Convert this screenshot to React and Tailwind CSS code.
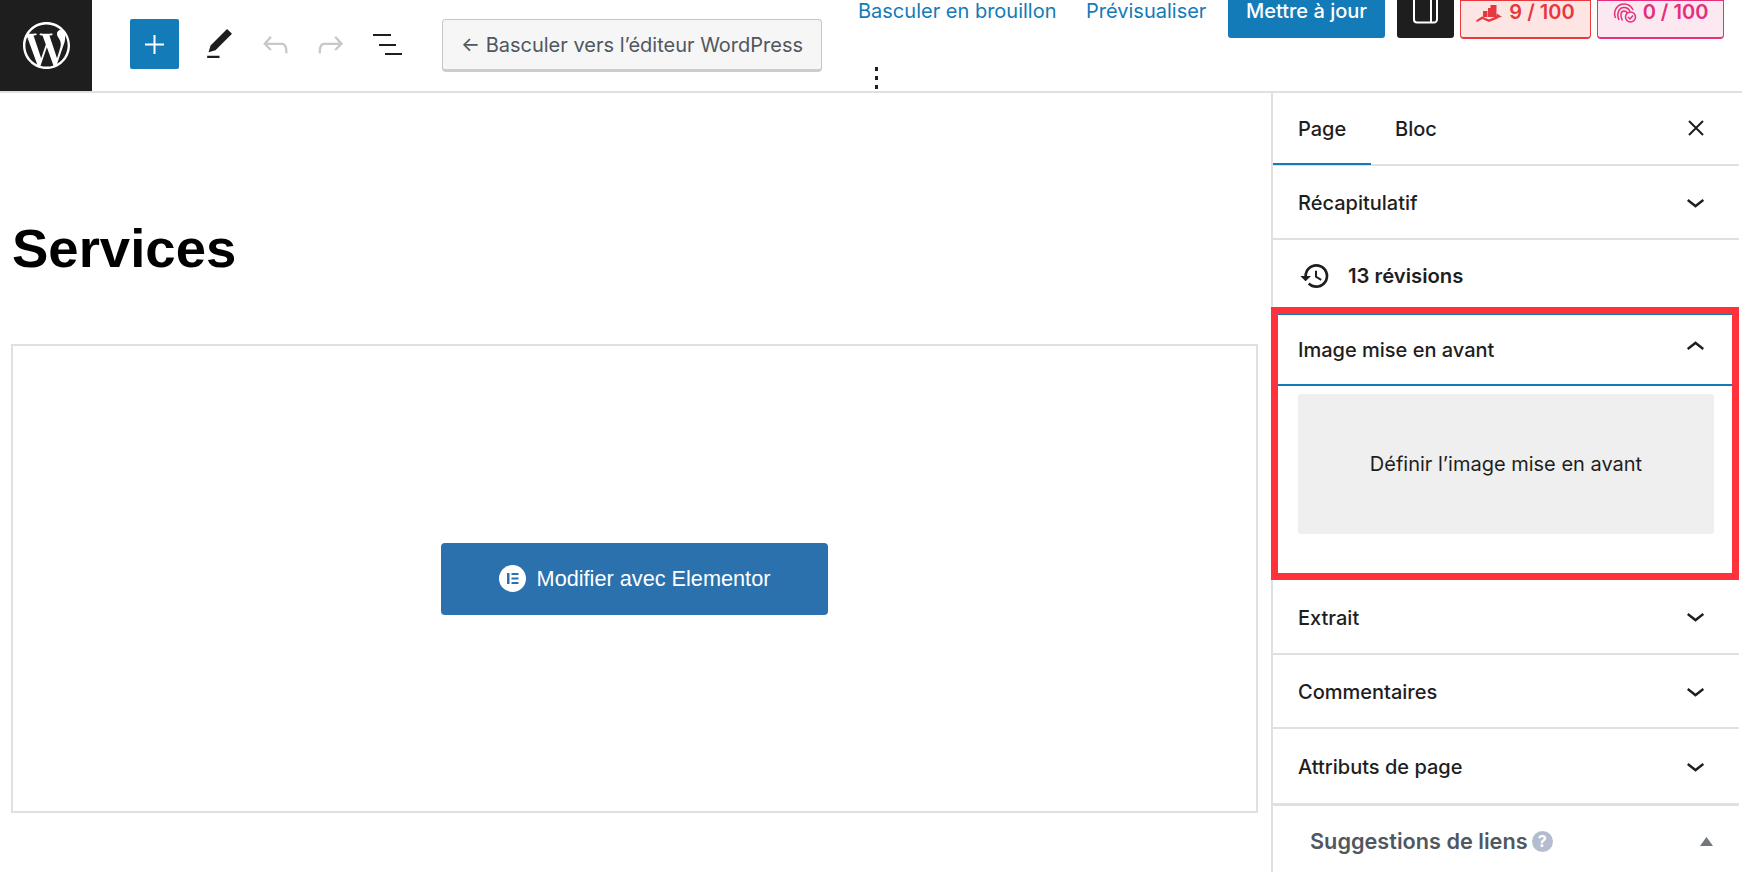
import React from "react";
import { SiWordpress } from "react-icons/si";
import { MdHistory } from "react-icons/md";

const Icon = ({ d, size = 37, className = "" }) => (
  <svg viewBox="0 0 24 24" width={size} height={size} fill="currentColor" className={`shrink-0 ${className}`}>
    <path d={d} />
  </svg>
);

const DOWN = "M17.5 11.6L12 16l-5.5-4.4.9-1.2L12 14l4.6-3.6 1 1.2z";
const UP = "M6.5 12.4L12 8l5.5 4.4-.9 1.2L12 10l-4.6 3.6-1-1.2z";

function Row({ label, border = true, tall = false }) {
  return (
    <div className={`flex items-center justify-between pl-[25px] shrink-0 ${tall ? "h-[75px]" : "h-[74px]"} ${border ? "border-b-2 border-[#e0e0e0]" : ""}`}>
      <span className="text-[20px] font-medium text-[#1e1e1e] pt-[2px]">{label}</span>
      <Icon d={DOWN} size={37} className="mr-[25px] mb-[2px] text-[#1e1e1e]" />
    </div>
  );
}

export default function App() {
  return (
    <div className="h-[872px] w-[1742px] overflow-hidden bg-white font-['Inter',sans-serif] flex flex-col">
      <header className="h-[93px] shrink-0 border-b-2 border-[#e0e0e0] flex items-start overflow-hidden">
        <div className="w-[92px] h-[91px] bg-[#1e1e1e] flex items-center justify-center text-white">
          <SiWordpress size={47} />
        </div>
        <div className="flex items-center h-[90px] ml-[38px] pb-[2px]">
          <div className="w-[49px] h-[50px] rounded-[2px] bg-[#127bb8] flex items-center justify-center">
            <svg width="19" height="19" viewBox="0 0 19 19" fill="none" stroke="white" strokeWidth="2">
              <path d="M9.5 0v19M0 9.5h19" />
            </svg>
          </div>
          <Icon d="M20.1 5.1L16.9 2 6.2 12.7l-1.3 4.4 4.5-1.3L20.1 5.1zM4 20.8h8v-1.5H4v1.5z" className="ml-[22px] text-[#1e1e1e]" />
          <Icon d="M18.3 11.7c-.6-.6-1.4-.9-2.3-.9H6.7l2.9-3.3-1.1-1-4.5 5L8.5 16l1-1-2.7-2.7H16c.5 0 .9.2 1.3.5 1 1 1 3.4 1 4.5v.3h1.5v-.2c0-1.5 0-4.3-1.5-5.7z" className="ml-[19px] text-[#c8c8c8]" />
          <Icon d="M15.6 6.5l-1.1 1 2.9 3.3H8c-.9 0-1.7.3-2.3.9-1.4 1.5-1.4 4.2-1.4 5.7v.2h1.5v-.3c0-1.1 0-3.5 1-4.5.3-.3.7-.5 1.3-.5h9.2L14.5 15l1.1 1.1 4.6-4.6-4.6-5z" className="ml-[18px] text-[#c8c8c8]" />
          <svg width="29" height="21" viewBox="0 0 29 21" fill="#1e1e1e" className="ml-[24px] shrink-0">
            <rect x="0" y="0" width="18" height="2" />
            <rect x="6" y="10" width="17" height="2" />
            <rect x="12" y="19" width="17" height="2" />
          </svg>
          <button className="ml-[40px] w-[380px] h-[53px] mt-[3px] rounded-[4px] bg-[#f6f6f6] border border-[#c6c6c6] border-b-[3px] border-b-[#cccccc] text-[20px] text-[#50575e] whitespace-nowrap pt-[1px]">
            ← Basculer vers l’éditeur WordPress
          </button>
        </div>
        <div className="ml-[36px] flex flex-col">
          <div className="flex items-start h-[39px] text-[20px] whitespace-nowrap">
            <span className="w-[197px] text-[#127bb8] leading-[22px]">Basculer en brouillon</span>
            <span className="w-[120px] text-[#127bb8] leading-[22px] ml-[31px]">Prévisualiser</span>
            <div className="ml-[22px] w-[157px] h-[38px] bg-[#127bb8] rounded-b-[3px] text-white font-medium text-center leading-[22px]">Mettre à jour</div>
            <div className="ml-[12px] w-[57px] h-[38px] bg-[#1e1e1e] rounded-b-[3px] flex justify-center">
              <svg width="27" height="24" viewBox="0 0 27 24" fill="none" stroke="white" strokeWidth="2">
                <path d="M2 -4V19.500a3 3 0 0 0 3 3H22a3 3 0 0 0 3-3V-4" />
                <path d="M19 -4V22" />
              </svg>
            </div>
            <div className="ml-[6px] w-[131px] h-[39px] bg-[#fde5e3] border border-[#e9393c] border-b-2 rounded-b-[4px] flex items-start justify-center gap-[6px] text-[#e5383f] font-semibold leading-[22px]">
              <svg width="27" height="17" viewBox="0 0 27 17" fill="#e5383f" className="mt-[4px] shrink-0">
                <rect x="7" y="6" width="4.500" height="6" />
                <rect x="12" y="3" width="3" height="9" />
                <rect x="14.500" y="0" width="6" height="12" />
                <path d="M0 15.500L6 11.500l7 3 7-3 1-3 5 3.500-3 .5-2.500 1.500-7.500 3-6.500-3-5.500 3z" />
              </svg>
              <span>9 / 100</span>
            </div>
            <div className="ml-[6px] w-[127px] h-[39px] bg-[#fbe8f0] border border-[#e62e7b] border-b-2 rounded-b-[4px] flex items-start justify-center gap-[6px] text-[#e62e7b] font-semibold leading-[22px]">
              <svg width="24" height="20" viewBox="0 0 24 20" fill="none" stroke="#e62e7b" strokeWidth="1.500" className="mt-[2px] shrink-0">
                <path d="M2.500 15C-.5 7 5 1 11 1c4 0 7.500 2.500 9 6" />
                <path d="M6 17C3 10 6.500 4.500 11 4.500c3 0 5 1.500 6 4" />
                <path d="M9.500 17.500C6.500 12 8 8 11 8c2 0 3 1 3.500 2.500" />
                <circle cx="17.500" cy="14" r="5" fill="#fbe8f0" />
                <path d="M15 14l2 2 3-3.500" />
              </svg>
              <span>0 / 100</span>
            </div>
          </div>
          <svg width="6" height="24" viewBox="0 0 6 24" fill="#1e1e1e" className="ml-[16px] mt-[27px]">
            <rect x="1" y="1" width="3" height="4" />
            <rect x="1" y="10" width="3" height="4" />
            <rect x="1" y="19" width="3" height="4" />
          </svg>
        </div>
      </header>

      <div className="flex flex-1 min-h-0">
        <main className="flex-1 pl-[11px] pr-[13px] pt-[126px]">
          <h1 className="font-['Liberation_Sans',sans-serif] font-bold text-[54.5px] leading-[60px] text-black pb-[65px] pl-[1px]">Services</h1>
          <div className="h-[469px] border-2 border-[#e0e0e0] flex items-center justify-center">
            <div className="w-[387px] h-[72px] bg-[#2a71ad] rounded-[4px] flex items-center justify-center gap-[11px] text-white font-['Liberation_Sans',sans-serif] text-[21.7px]">
              <svg width="27" height="27" viewBox="0 0 27 27" className="shrink-0">
                <circle cx="13.5" cy="13.5" r="13.5" fill="white" />
                <rect x="8" y="8" width="2.5" height="11" fill="#2a71ad" />
                <rect x="12.5" y="8" width="7" height="2" fill="#2a71ad" />
                <rect x="12.5" y="12.5" width="7" height="2" fill="#2a71ad" />
                <rect x="12.5" y="17" width="7" height="2" fill="#2a71ad" />
              </svg>
              <span className="pt-[1px]">Modifier avec Elementor</span>
            </div>
          </div>
        </main>

        <aside className="w-[471px] shrink-0 border-l-2 border-[#e0e0e0] pr-[3px] flex flex-col">
          <div className="h-[73px] shrink-0 border-b-2 border-[#e0e0e0] flex items-start text-[20px] text-[#1e1e1e] font-medium">
            <div className="w-[98px] h-[72px] border-b-2 border-[#127bb8] pl-[25px] pt-[25px] leading-[22px]">Page</div>
            <div className="pl-[24px] pt-[25px] leading-[22px]">Bloc</div>
            <svg width="16" height="16" viewBox="0 0 16 16" fill="none" stroke="#1e1e1e" strokeWidth="2" className="ml-auto mr-[35px] mt-[27px] shrink-0">
              <path d="M1 1l14 14M15 1L1 15" />
            </svg>
          </div>
          <Row label="Récapitulatif" />
          <div className="h-[67px] flex items-center pl-[26px] pt-[5px] gap-[17px] shrink-0">
            <MdHistory size={32} className="text-[#1e1e1e]" />
            <span className="text-[20.3px] font-semibold text-[#1e1e1e]">13 révisions</span>
          </div>
          <section className="h-[273px] shrink-0 -ml-[2px] border-[7px] border-[#ff323c] bg-white">
            <div className="h-[72px] border-t border-b-2 border-[#127bb8] flex items-center justify-between pl-[20px]">
              <span className="text-[20px] font-medium text-[#1e1e1e] pt-[1px]">Image mise en avant</span>
              <Icon d={UP} size={37} className="mr-[18px] mb-[4px] text-[#1e1e1e]" />
            </div>
            <div className="pl-[20px] pr-[18px] pt-[8px]">
              <div className="h-[140px] bg-[#efefef] rounded-[3px] flex items-center justify-center text-[20px] text-[#1e1e1e]">
                Définir l’image mise en avant
              </div>
            </div>
          </section>
          <Row label="Extrait" tall />
          <Row label="Commentaires" />
          <Row label="Attributs de page" border={false} />
          <div className="h-[3px] bg-[#e0e0e0] shrink-0" />
          <div className="flex items-center pl-[37px] h-[70px] shrink-0">
            <span className="text-[21.7px] font-semibold text-[#50575e]">Suggestions de liens</span>
            <span className="ml-[4px] w-[21px] h-[21px] rounded-full bg-[#b4bdcf] text-white text-[16px] font-bold flex items-center justify-center">?</span>
            <svg width="13" height="9" viewBox="0 0 13 9" fill="#72777c" className="ml-auto mr-[26px]">
              <path d="M6.5 0L13 9H0z" />
            </svg>
          </div>
        </aside>
      </div>
    </div>
  );
}
